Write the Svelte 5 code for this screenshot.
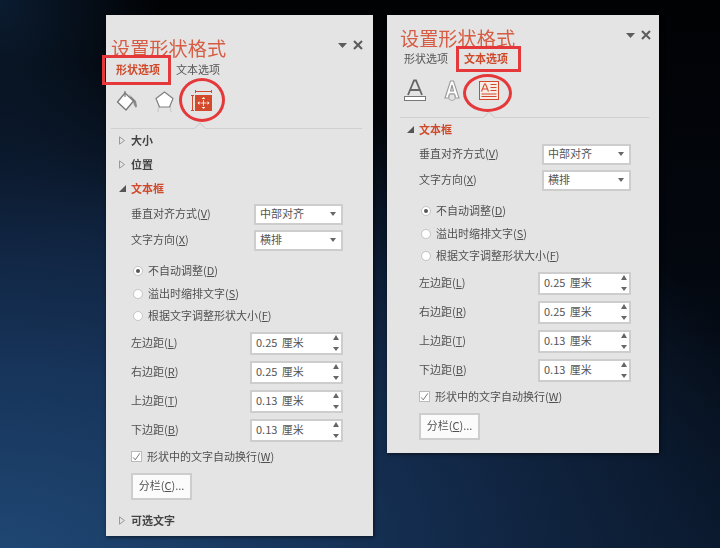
<script>
  const spins = [
    { label: "左边距", key: "L", value: "0.25 厘米" },
    { label: "右边距", key: "R", value: "0.25 厘米" },
    { label: "上边距", key: "T", value: "0.13 厘米" },
    { label: "下边距", key: "B", value: "0.13 厘米" },
  ];
  const radios = [
    { label: "不自动调整", key: "D", on: true },
    { label: "溢出时缩排文字", key: "S", on: false },
    { label: "根据文字调整形状大小", key: "F", on: false },
  ];
</script>

{#snippet head()}
  <div class="title-row">
    <span class="title">设置形状格式</span>
    <span class="controls">
      <svg width="9" height="5" viewBox="0 0 9 5"><path d="M0 0h9L4.5 5z" fill="#5c5c5c" /></svg>
      <svg width="10" height="10" viewBox="0 0 10 10"><path d="M1 1l8 8M9 1l-8 8" stroke="#5c5c5c" stroke-width="2" /></svg>
    </span>
  </div>
{/snippet}

{#snippet closed(text)}
  <svg class="arrow shut" width="6" height="9" viewBox="0 0 6 9"><path d="M.5.800L5.500 4.500.5 8.200z" fill="none" stroke="#999" /></svg>
  {text}
{/snippet}

{#snippet textbox()}
  <div class="section open">
    <svg class="arrow" width="7" height="7" viewBox="0 0 7 7"><path d="M7 0v7H0z" fill="#555" /></svg>
    文本框
  </div>
  <div class="fields">
    <div class="field">
      <span class="lbl">垂直对齐方式(<u>V</u>)</span>
      <div class="select">中部对齐<i></i></div>
    </div>
    <div class="field">
      <span class="lbl">文字方向(<u>X</u>)</span>
      <div class="select">横排<i></i></div>
    </div>
    <div class="radios">
      {#each radios as r}
        <div class="radio">
          <span class="dot" class:on={r.on}></span>
          <span class="lbl">{r.label}(<u>{r.key}</u>)</span>
        </div>
      {/each}
    </div>
    {#each spins as s}
      <div class="field spin-row">
        <span class="lbl">{s.label}(<u>{s.key}</u>)</span>
        <div class="spin">
          {s.value}
          <span class="steppers"><b class="up"></b><b class="down"></b></span>
        </div>
      </div>
    {/each}
    <div class="check">
      <span class="box">
        <svg width="11" height="10" viewBox="0 0 11 10"><path d="M1.5 5.5l2.5 3 5.5-8" fill="none" stroke="#777" stroke-width="1.2" /></svg>
      </span>
      <span class="lbl">形状中的文字自动换行(<u>W</u>)</span>
    </div>
    <div class="btn">分栏(<u>C</u>)...</div>
  </div>
{/snippet}

<div class="stage">
  <section class="panel left">
    {@render head()}
    <div class="tabs">
      <span class="tab active">形状选项</span>
      <span class="tab">文本选项</span>
    </div>
    <div class="icons">
      <!-- fill -->
      <svg width="22" height="22" viewBox="0 0 22 22">
        <path d="M13 4l7 7 1 5-1 2-2-3-1-4z" fill="#8a8a8a" />
        <path d="M9 3L1.500 12l8.500 8 7.500-9z" fill="#fff" stroke="#777" stroke-width="1.300" stroke-linejoin="round" />
        <path d="M9 1v6" stroke="#777" stroke-width="1.200" />
      </svg>
      <!-- line -->
      <svg width="19" height="23" viewBox="0 0 19 23">
        <path d="M4 15l-1 7M15 15l1 7" stroke="#ccc" stroke-width="1.200" />
        <path d="M9.500 2L18 8.500 14.500 17h-10L1 8.500z" fill="#fff" stroke="#808080" stroke-width="1.200" stroke-linejoin="round" />
      </svg>
      <!-- size -->
      <svg width="22" height="22" viewBox="0 0 22 22">
        <path d="M4.500 1.500h16M4.500 0v3M20.500 0v3" stroke="#d2492b" stroke-width="1" fill="none" />
        <path d="M0 5.500h3M0 20.500h3M1.500 5.500v15" stroke="#d2492b" stroke-width="1" fill="none" />
        <rect x="4" y="5" width="17" height="16" fill="#d2492b" />
        <path d="M12.500 7l-1.800 2h3.600zM12.500 19l-1.800-2h3.600zM6.500 13l2-1.800v3.600zM18.500 13l-2-1.800v3.600z" fill="#fff" />
        <path d="M12.500 10v6M9.500 13h6" stroke="#fff" stroke-width=".8" />
      </svg>
    </div>
    <div class="rule"></div>
    <div class="section">{@render closed("大小")}</div>
    <div class="section">{@render closed("位置")}</div>
    {@render textbox()}
    <div class="section last">{@render closed("可选文字")}</div>
    <span class="mark rect"></span>
    <span class="mark ring"></span>
  </section>

  <section class="panel right">
    {@render head()}
    <div class="tabs">
      <span class="tab">形状选项</span>
      <span class="tab active">文本选项</span>
    </div>
    <div class="icons">
      <!-- text fill -->
      <svg width="22" height="22" viewBox="0 0 22 22">
        <path d="M4 16L10 1.500h2L18 16M6.500 11h9" fill="none" stroke="#666" stroke-width="1.800" />
        <rect x=".5" y="17.500" width="21" height="4" fill="#fff" stroke="#777" />
      </svg>
      <!-- text outline -->
      <svg width="16" height="22" viewBox="0 0 16 22">
        <path d="M1 19L6.500 2h3L15 19h-3.500l-1-4h-5l-1 4zM6.500 12h3L8 6z" fill="#fff" stroke="#999" stroke-width="1.100" />
        <circle cx="8" cy="18" r="3.500" fill="none" stroke="#aaa" />
      </svg>
      <!-- text box -->
      <svg class="box-icon" width="20" height="19" viewBox="0 0 20 19">
        <rect x=".5" y=".5" width="19" height="18" fill="#f8ece6" stroke="#d2492b" />
        <path d="M2.500 10.500L5.500 3h1l3 7.500M3.800 8h4.400" fill="none" stroke="#d2492b" stroke-width="1.100" />
        <path d="M11.500 3.500h6M11.500 6.500h6M11.500 9.500h6M2.500 13h15M2.500 15.500h15" stroke="#d2492b" stroke-width="1" />
      </svg>
    </div>
    <div class="rule"></div>
    {@render textbox()}
    <span class="mark rect"></span>
    <span class="mark ring"></span>
  </section>
</div>

<style>
  :global(body) {
    margin: 0;
  }
  .stage {
    width: 720px;
    height: 548px;
    box-sizing: border-box;
    overflow: hidden;
    padding: 15px 0 0 106px;
    display: flex;
    align-items: flex-start;
    gap: 14px;
    background:
      radial-gradient(ellipse 820px 500px at 0 560px, #1f4874 0%, #17345a 38%, #102440 65%, rgba(10, 24, 42, 0) 100%),
      radial-gradient(ellipse 160px 220px at 0 0, #0b1c30 0%, rgba(11, 28, 48, 0) 100%),
      linear-gradient(#010204, #03070e 45%, #081425);
    font-family: "Noto Sans CJK SC", "Noto Sans", sans-serif;
    font-size: 11px;
    color: #505050;
  }
  .panel {
    position: relative;
    flex: none;
    box-sizing: border-box;
    background: #e4e4e4;
    box-shadow: 1px 1px 4px rgba(0, 0, 0, 0.6);
    filter: blur(0.35px);
  }
  .left {
    --pad: 5px;
    --indent: 25px;
    --field-end: 30px;
    --notch: 90px;
    --tab-left: 10px;
    --tab-gap: 16px;
    --icon-gap: 17px;
    --close-end: 10px;
    --rule-end: 11px;
    width: 267px;
    height: 521px;
    padding-top: 21px;
  }
  .right {
    --pad: 13px;
    --indent: 32px;
    --field-end: 28px;
    --notch: 98px;
    --tab-left: 17px;
    --tab-gap: 16px;
    --icon-gap: 18px;
    --close-end: 8px;
    --rule-end: 10px;
    width: 272px;
    height: 438px;
    padding-top: 11px;
  }
  .title-row {
    display: flex;
    justify-content: space-between;
    align-items: center;
    height: 24px;
    padding-left: var(--pad);
    padding-right: var(--close-end);
  }
  .title {
    font-size: 19.2px;
    line-height: 24px;
    color: #d65d43;
    white-space: nowrap;
  }
  .controls {
    display: flex;
    align-items: center;
    gap: 6px;
    margin-top: -6px;
  }
  .tabs {
    display: flex;
    gap: var(--tab-gap);
    height: 18px;
    line-height: 16px;
    padding: 0 0 2px var(--tab-left);
    align-items: center;
    color: #555;
  }
  .right .tabs {
    margin-top: -1px;
  }
  .tab.active {
    color: #cf4a2a;
    font-weight: 700;
  }
  .icons {
    display: flex;
    align-items: center;
    gap: var(--icon-gap);
    height: 24px;
    margin-top: 9px;
    padding-left: var(--tab-left);
  }
  .box-icon {
    margin-left: 1px;
  }
  .rule {
    position: relative;
    height: 1px;
    margin: 15px var(--rule-end) 0 var(--pad);
    background: #cfcfcf;
  }
  .rule::after {
    content: "";
    position: absolute;
    left: calc(var(--notch) - var(--pad));
    top: -4px;
    width: 7px;
    height: 7px;
    background: #e4e4e4;
    border-left: 1px solid #cfcfcf;
    border-top: 1px solid #cfcfcf;
    transform: rotate(45deg);
  }
  .section {
    position: relative;
    height: 24px;
    line-height: 22px;
    padding-left: var(--indent);
    font-weight: 700;
    color: #444;
  }
  .section.open {
    color: #cf4a2a;
  }
  .right .section {
    margin-bottom: -1px;
  }
  .section.last {
    margin-top: 9px;
  }
  .arrow {
    position: absolute;
    left: calc(var(--indent) - 12px);
    top: 8px;
  }
  .arrow.shut {
    top: 7px;
  }
  .fields {
    padding: 0 var(--field-end) 0 var(--indent);
  }
  .field {
    display: flex;
    justify-content: space-between;
    align-items: center;
    height: 26px;
  }
  .lbl {
    margin-top: -2px;
  }
  .select {
    position: relative;
    box-sizing: border-box;
    width: 89px;
    height: 21px;
    line-height: 15px;
    padding-left: 4px;
    background: #fff;
    border: 2px solid #cdcdcd;
    color: #555;
  }
  .select i {
    position: absolute;
    right: 5px;
    top: 6px;
    border: 3.5px solid transparent;
    border-top: 4px solid #666;
    border-bottom: 0;
  }
  .radios {
    padding: 7px 0 1px 2px;
  }
  .radio {
    display: flex;
    align-items: center;
    gap: 5px;
    height: 22.5px;
  }
  .dot {
    position: relative;
    box-sizing: border-box;
    width: 10px;
    height: 10px;
    border: 1px solid #c4c4c4;
    border-radius: 50%;
    background: #fff;
  }
  .dot.on::after {
    content: "";
    position: absolute;
    left: 2px;
    top: 2px;
    width: 4px;
    height: 4px;
    border-radius: 50%;
    background: #555;
  }
  .spin-row {
    height: 29px;
  }
  .spin {
    position: relative;
    box-sizing: border-box;
    width: 93px;
    height: 23px;
    line-height: 17px;
    padding-left: 4px;
    word-spacing: 2px;
    background: #fff;
    border: 2px solid #cdcdcd;
    color: #555;
  }
  .steppers b {
    position: absolute;
    right: 2px;
    border: 3.5px solid transparent;
  }
  .steppers .up {
    top: 1px;
    border-top: 0;
    border-bottom: 5px solid #666;
  }
  .steppers .down {
    bottom: 2px;
    border-bottom: 0;
    border-top: 4px solid #666;
  }
  .check {
    display: flex;
    align-items: center;
    gap: 5px;
    height: 24px;
  }
  .box {
    box-sizing: border-box;
    width: 11px;
    height: 11px;
    display: flex;
    align-items: center;
    justify-content: center;
    background: #fff;
    border: 1px solid #bbb;
  }
  .btn {
    box-sizing: border-box;
    width: 61px;
    height: 27px;
    line-height: 21px;
    margin-top: 4px;
    text-align: center;
    background: #fbfbfb;
    border: 2px solid #cdcdcd;
  }
  .mark {
    position: absolute;
    box-sizing: border-box;
    border: 3px solid #e5383b;
    pointer-events: none;
  }
  .ring {
    border-radius: 50%;
  }
  .left .rect {
    left: -4px;
    top: 40px;
    width: 69px;
    height: 30px;
  }
  .left .ring {
    left: 73px;
    top: 63px;
    width: 46px;
    height: 44px;
  }
  .right .rect {
    left: 69px;
    top: 31px;
    width: 65px;
    height: 26px;
  }
  .right .ring {
    left: 76px;
    top: 59px;
    width: 49px;
    height: 38px;
  }
</style>
